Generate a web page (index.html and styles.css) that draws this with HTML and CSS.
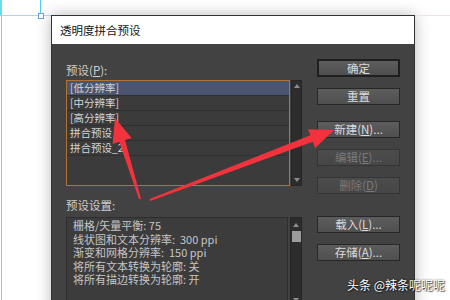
FILE: index.html
```html
<!DOCTYPE html>
<html lang="zh-CN">
<head>
<meta charset="utf-8">
<title>透明度拼合预设</title>
<link rel="stylesheet" href="styles.css">
</head>
<body>
<div class="canvas">
  <div class="guide guide-top"></div>
  <div class="guide guide-cyan"></div>
  <div class="guide guide-hl"></div>
  <div class="guide guide-hl2"></div>
  <div class="guide guide-pink"></div>
  <div class="guide guide-purple"></div>
  <div class="guide handle"></div>

  <div class="dialog">
    <div class="titlebar">透明度拼合预设</div>
    <div class="dbody">
      <div class="leftcol">
        <div class="label">预设(<u>P</u>):</div>
        <div class="listwrap">
          <div class="list">
            <div class="row sel">[低分辨率]</div>
            <div class="row">[中分辨率]</div>
            <div class="row">[高分辨率]</div>
            <div class="row">拼合预设</div>
            <div class="row">拼合预设_2</div>
          </div>
          <div class="scroll">
            <span class="arr up"></span>
            <span class="arr down"></span>
          </div>
        </div>
        <div class="label label2">预设设置:</div>
        <div class="setwrap">
          <div class="settings">
            <div class="sline">栅格/矢量平衡: 75</div>
            <div class="sline">线状图和文本分辨率:&nbsp; 300 ppi</div>
            <div class="sline">渐变和网格分辨率:&nbsp; 150 ppi</div>
            <div class="sline">将所有文本转换为轮廓: 关</div>
            <div class="sline">将所有描边转换为轮廓: 开</div>
          </div>
          <div class="scroll scroll2">
            <span class="arr up"></span>
            <span class="thumb"></span>
            <span class="spacer"></span>
            <span class="arr down"></span>
          </div>
        </div>
      </div>
      <div class="rightcol">
        <div class="btn default">确定</div>
        <div class="btn sep1">重置</div>
        <div class="btn">新建(<u>N</u>)...</div>
        <div class="btn disabled">编辑(<u>E</u>)...</div>
        <div class="btn disabled sep2">删除(<u>D</u>)</div>
        <div class="btn">载入(<u>L</u>)...</div>
        <div class="btn">存储(<u>A</u>)...</div>
      </div>
    </div>
  </div>

  <svg class="arrows" width="450" height="300" viewBox="0 0 450 300">
    <polygon fill="#f2333d" points="115,118 131.6,137.9 125,140 141,198.7 139,199.3 119.2,141.8 112.6,143.9"/>
    <polygon fill="#f2333d" points="334,130 315.2,147.9 312.8,141.8 150.4,200.9 149.6,199.1 310.4,135.2 308,129.2"/>
  </svg>

  <div class="watermark">头条 @辣条呢呢呢</div>
</div>
</body>
</html>
```
FILE: styles.css
```css
html, body {
  margin: 0;
  padding: 0;
  background: #ffffff;
  overflow: hidden;
}
.canvas {
  position: relative;
  width: 450px;
  height: 300px;
  box-sizing: border-box;
  padding: 15px 0 0 51px;
  overflow: hidden;
  font-family: "Noto Sans CJK SC", "Noto Sans", sans-serif;
}
.guide { position: absolute; }
.guide-top { left: 0; top: 0; width: 2px; height: 15px; background: #5fe0ef; }
.guide-cyan { left: 40px; top: 0; width: 1px; height: 13px; background: #4fd0e8; }
.guide-hl { left: 0; top: 15px; width: 38px; height: 1px; background: #b6d0f2; }
.guide-hl2 { left: 43px; top: 15px; width: 8px; height: 1px; background: #b6d0f2; }
.guide-pink { left: 415px; top: 15px; width: 35px; height: 1px; background: #f1e2e8; }
.guide-purple { left: 1px; top: 15px; width: 1px; height: 285px; background: #b9b2f2; }
.handle {
  left: 38px; top: 13px; width: 4px; height: 4px;
  border: 1px solid #6a9fdc; background: #fff;
}

.dialog {
  width: 364px;
  height: 300px;
  box-sizing: border-box;
  border: 1px solid #333333;
  background: #424242;
  box-shadow: 0 0 14px rgba(0, 0, 0, 0.28);
  display: flex;
  flex-direction: column;
}
.titlebar {
  height: 28px;
  line-height: 28px;
  padding-left: 8px;
  background: #ffffff;
  color: #151515;
  font-size: 11.5px;
}
.dbody {
  flex: 1;
  display: flex;
  gap: 15px;
  padding: 0 14px;
  background: #424242;
}
.leftcol {
  width: 236px;
  display: flex;
  flex-direction: column;
  padding-top: 18px;
}
.label {
  height: 16px;
  line-height: 16px;
  font-size: 11.5px;
  color: #cfcfcf;
  margin-bottom: 2px;
}
.label2 {
  margin-top: 11px;
  margin-bottom: 4px;
}
.listwrap {
  display: flex;
  gap: 1px;
  height: 106px;
}
.list {
  width: 224px;
  box-sizing: border-box;
  border: 1px solid #b3722f;
  background: #3b3b3b;
}
.row {
  height: 14px;
  line-height: 14px;
  border-bottom: 1px solid #2f2f2f;
  padding-left: 3px;
  font-size: 10.5px;
  color: #d6d6d6;
}
.row.sel { background: #4a5670; }
.scroll {
  width: 11px;
  box-sizing: border-box;
  background: #2d2d2d;
  border: 1px solid #262626;
  display: flex;
  flex-direction: column;
  justify-content: space-between;
  align-items: center;
  padding: 3px 0;
}
.arr {
  width: 0;
  height: 0;
  border-left: 3px solid transparent;
  border-right: 3px solid transparent;
}
.arr.up { border-bottom: 4px solid #8d8d8d; }
.arr.down { border-top: 4px solid #8d8d8d; }
.setwrap {
  display: flex;
  gap: 2px;
  height: 90px;
}
.settings {
  width: 222px;
  box-sizing: border-box;
  border: 1px solid #2e2e2e;
  background: #3c3c3c;
  padding: 1px 0 0 6px;
}
.sline {
  height: 13.5px;
  line-height: 13.5px;
  font-size: 11px;
  color: #c6c6c6;
  white-space: nowrap;
}
.scroll2 {
  width: 12px;
  justify-content: flex-start;
  padding: 5px 0 4px;
}
.thumb {
  width: 9px;
  height: 11px;
  margin-top: 4px;
  background: #9c9c9c;
}
.spacer { flex: 1; }
.rightcol {
  width: 83px;
  display: flex;
  flex-direction: column;
  gap: 11px;
  padding-top: 15px;
}
.btn {
  height: 17px;
  box-sizing: border-box;
  border: 1px solid #272727;
  background: linear-gradient(#5d5d5d, #4f4f4f);
  color: #dcdcdc;
  font-size: 11.5px;
  line-height: 15px;
  text-align: center;
}
.btn.default {
  height: 18px;
  border: 2px solid #1f1f1f;
  line-height: 14px;
}
.btn.disabled {
  background: linear-gradient(#4c4c4c, #464646);
  border-color: #353535;
  color: #7a7a7a;
}
.sep1 { margin-bottom: 5px; }
.sep2 { margin-bottom: 11px; }
.arrows {
  position: absolute;
  left: 0;
  top: 0;
  pointer-events: none;
}
.watermark {
  position: absolute;
  left: 347px;
  top: 277px;
  font-size: 12px;
  line-height: 16px;
  color: #ffffff;
  white-space: nowrap;
  text-shadow: 0 0 2px rgba(0, 0, 0, 0.8), 1px 1px 1px rgba(0, 0, 0, 0.6);
}
```
